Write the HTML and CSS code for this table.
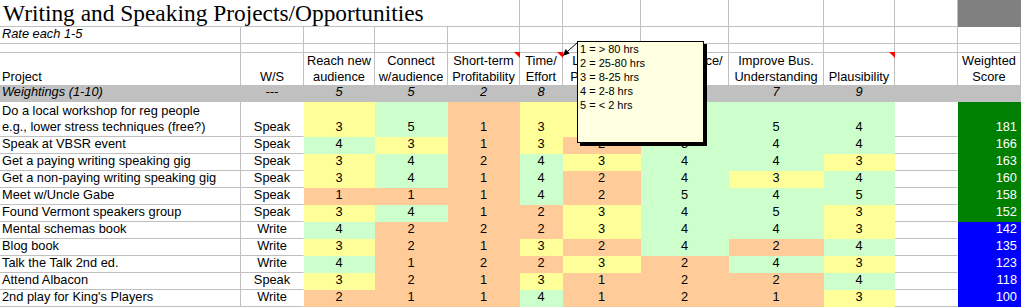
FILE: index.html
```html
<!DOCTYPE html>
<html>
<head>
<meta charset="utf-8">
<link rel="stylesheet" href="styles.css">
</head>
<body>
<div class="sheet">
  <!-- title row -->
  <div class="cell title"><span>Writing and Speaking Projects/Opportunities</span></div>
  <div class="cell"></div><div class="cell"></div><div class="cell"></div><div class="cell"></div><div class="cell"></div><div class="cell"></div>
  <div class="cell dk"></div>

  <!-- rate row -->
  <div class="cell l it"><span>Rate each 1-5</span></div>
  <div class="cell"></div><div class="cell"></div><div class="cell"></div><div class="cell"></div><div class="cell"></div><div class="cell"></div>
  <div class="cell"></div><div class="cell"></div><div class="cell"></div><div class="cell"></div><div class="cell"></div>

  <!-- spacer row -->
  <div class="cell"></div><div class="cell"></div><div class="cell"></div><div class="cell"></div><div class="cell"></div><div class="cell"></div>
  <div class="cell"></div><div class="cell"></div><div class="cell"></div><div class="cell"></div><div class="cell"></div><div class="cell"></div>

  <!-- header row -->
  <div class="cell h l"><span>Project</span></div>
  <div class="cell h"><span>W/S</span></div>
  <div class="cell h"><span>Reach new<br>audience</span></div>
  <div class="cell h"><span>Connect<br>w/audience</span></div>
  <div class="cell h tri"><span>Short-term<br>Profitability</span></div>
  <div class="cell h tri"><span>Time/<br>Effort</span></div>
  <div class="cell h"><span>Long-term<br>Profitability</span></div>
  <div class="cell h"><span>Competence/<br>Skill</span></div>
  <div class="cell h"><span>Improve Bus.<br>Understanding</span></div>
  <div class="cell h tri"><span>Plausibility</span></div>
  <div class="cell h"></div>
  <div class="cell h"><span>Weighted<br>Score</span></div>

  <!-- weightings row -->
  <div class="cell w l"><span>Weightings (1-10)</span></div>
  <div class="cell w"><span>---</span></div>
  <div class="cell w"><span>5</span></div>
  <div class="cell w"><span>5</span></div>
  <div class="cell w"><span>2</span></div>
  <div class="cell w"><span>8</span></div>
  <div class="cell w"><span>6</span></div>
  <div class="cell w"><span>6</span></div>
  <div class="cell w"><span>7</span></div>
  <div class="cell w"><span>9</span></div>
  <div class="cell w"></div>
  <div class="cell w"></div>

  <!-- data rows -->
  <div class="cell l"><span>Do a local workshop for reg people<br>e.g., lower stress techniques (free?)</span></div>
  <div class="cell ws"><span>Speak</span></div>
  <div class="cell y"><span>3</span></div><div class="cell g"><span>5</span></div><div class="cell p"><span>1</span></div><div class="cell y"><span>3</span></div>
  <div class="cell y"><span>3</span></div><div class="cell g"><span>4</span></div><div class="cell g"><span>5</span></div><div class="cell g"><span>4</span></div>
  <div class="cell k"></div><div class="cell r sg"><span>181</span></div>

  <div class="cell l"><span>Speak at VBSR event</span></div>
  <div class="cell ws"><span>Speak</span></div>
  <div class="cell g"><span>4</span></div><div class="cell y"><span>3</span></div><div class="cell p"><span>1</span></div><div class="cell y"><span>3</span></div>
  <div class="cell p"><span>2</span></div><div class="cell g"><span>3</span></div><div class="cell g"><span>4</span></div><div class="cell g"><span>4</span></div>
  <div class="cell k"></div><div class="cell r sg"><span>166</span></div>

  <div class="cell l"><span>Get a paying writing speaking gig</span></div>
  <div class="cell ws"><span>Speak</span></div>
  <div class="cell y"><span>3</span></div><div class="cell g"><span>4</span></div><div class="cell p"><span>2</span></div><div class="cell g"><span>4</span></div>
  <div class="cell y"><span>3</span></div><div class="cell g"><span>4</span></div><div class="cell g"><span>4</span></div><div class="cell y"><span>3</span></div>
  <div class="cell k"></div><div class="cell r sg"><span>163</span></div>

  <div class="cell l"><span>Get a non-paying writing speaking gig</span></div>
  <div class="cell ws"><span>Speak</span></div>
  <div class="cell y"><span>3</span></div><div class="cell g"><span>4</span></div><div class="cell p"><span>1</span></div><div class="cell g"><span>4</span></div>
  <div class="cell p"><span>2</span></div><div class="cell g"><span>4</span></div><div class="cell y"><span>3</span></div><div class="cell g"><span>4</span></div>
  <div class="cell k"></div><div class="cell r sg"><span>160</span></div>

  <div class="cell l"><span>Meet w/Uncle Gabe</span></div>
  <div class="cell ws"><span>Speak</span></div>
  <div class="cell p"><span>1</span></div><div class="cell p"><span>1</span></div><div class="cell p"><span>1</span></div><div class="cell g"><span>4</span></div>
  <div class="cell p"><span>2</span></div><div class="cell g"><span>5</span></div><div class="cell g"><span>4</span></div><div class="cell g"><span>5</span></div>
  <div class="cell k"></div><div class="cell r sg"><span>158</span></div>

  <div class="cell l"><span>Found Vermont speakers group</span></div>
  <div class="cell ws"><span>Speak</span></div>
  <div class="cell y"><span>3</span></div><div class="cell g"><span>4</span></div><div class="cell p"><span>1</span></div><div class="cell p"><span>2</span></div>
  <div class="cell y"><span>3</span></div><div class="cell g"><span>4</span></div><div class="cell g"><span>5</span></div><div class="cell y"><span>3</span></div>
  <div class="cell k"></div><div class="cell r sg"><span>152</span></div>

  <div class="cell l"><span>Mental schemas book</span></div>
  <div class="cell ws"><span>Write</span></div>
  <div class="cell g"><span>4</span></div><div class="cell p"><span>2</span></div><div class="cell p"><span>2</span></div><div class="cell p"><span>2</span></div>
  <div class="cell y"><span>3</span></div><div class="cell g"><span>4</span></div><div class="cell g"><span>4</span></div><div class="cell y"><span>3</span></div>
  <div class="cell k"></div><div class="cell r sb"><span>142</span></div>

  <div class="cell l"><span>Blog book</span></div>
  <div class="cell ws"><span>Write</span></div>
  <div class="cell y"><span>3</span></div><div class="cell p"><span>2</span></div><div class="cell p"><span>1</span></div><div class="cell y"><span>3</span></div>
  <div class="cell p"><span>2</span></div><div class="cell g"><span>4</span></div><div class="cell p"><span>2</span></div><div class="cell g"><span>4</span></div>
  <div class="cell k"></div><div class="cell r sb"><span>135</span></div>

  <div class="cell l"><span>Talk the Talk 2nd ed.</span></div>
  <div class="cell ws"><span>Write</span></div>
  <div class="cell g"><span>4</span></div><div class="cell p"><span>1</span></div><div class="cell p"><span>2</span></div><div class="cell p"><span>2</span></div>
  <div class="cell y"><span>3</span></div><div class="cell p"><span>2</span></div><div class="cell g"><span>4</span></div><div class="cell y"><span>3</span></div>
  <div class="cell k"></div><div class="cell r sb"><span>123</span></div>

  <div class="cell l"><span>Attend Albacon</span></div>
  <div class="cell ws"><span>Speak</span></div>
  <div class="cell y"><span>3</span></div><div class="cell p"><span>2</span></div><div class="cell p"><span>1</span></div><div class="cell y"><span>3</span></div>
  <div class="cell p"><span>1</span></div><div class="cell p"><span>2</span></div><div class="cell p"><span>2</span></div><div class="cell g"><span>4</span></div>
  <div class="cell k"></div><div class="cell r sb"><span>118</span></div>

  <div class="cell l"><span>2nd play for King's Players</span></div>
  <div class="cell ws"><span>Write</span></div>
  <div class="cell p"><span>2</span></div><div class="cell p"><span>1</span></div><div class="cell p"><span>1</span></div><div class="cell g"><span>4</span></div>
  <div class="cell p"><span>1</span></div><div class="cell p"><span>2</span></div><div class="cell p"><span>1</span></div><div class="cell y"><span>3</span></div>
  <div class="cell k"></div><div class="cell r sb"><span>100</span></div>

  <!-- comment arrow + tooltip -->
  <svg class="arrow" width="22" height="22" viewBox="0 0 22 22">
    <line x1="18" y1="4" x2="7.7" y2="13.3" stroke="#000" stroke-width="1"/>
    <polygon points="2.5,18 9.7,15.5 5.7,11.1" fill="#000"/>
  </svg>
  <div class="tip">
    <div>1 = &gt; 80 hrs</div>
    <div>2 = 25-80 hrs</div>
    <div>3 = 8-25 hrs</div>
    <div>4 = 2-8 hrs</div>
    <div>5 = &lt; 2 hrs</div>
  </div>
</div>
</body>
</html>
```
FILE: styles.css
```css
* { box-sizing: border-box; }
html, body { margin: 0; padding: 0; background: #fff; }
body { overflow: hidden; }

.sheet {
  position: relative;
  display: grid;
  grid-template-columns: 241px 63px 71px 73px 72px 43px 78px 88px 95px 71px 63px 63px;
  grid-template-rows: 27px 17px 9px 32px 17px 35px repeat(10, 17px);
  width: 1021px;
  font-family: "Liberation Sans", Arial, sans-serif;
  font-size: 12.8px;
  color: #000;
}

.cell {
  position: relative;
  display: flex;
  flex-direction: column;
  justify-content: flex-end;
  min-width: 0;
  border-right: 1px solid #c0c0c0;
  border-bottom: 1px solid #c0c0c0;
  padding: 0 0 1px 0;
  line-height: 16px;
  white-space: nowrap;
  text-align: center;
}

.title {
  grid-column: span 5;
  justify-content: flex-start;
  padding: 0 0 0 3px;
  font-family: "Liberation Serif", "Times New Roman", serif;
  font-size: 23.4px;
  line-height: 26px;
  text-align: left;
}

.dk { background: #808080; border-color: transparent; }

.l { text-align: left; padding-left: 2px; }
.r { text-align: right; padding-right: 3px; }
.it { font-style: italic; }

.h { border-bottom: 0; padding-bottom: 0; }

.w { background: #c0c0c0; border-color: transparent; font-style: italic; }

.ws { border-right-color: transparent; }
.k { border-right-color: transparent; }

.y { background: #ffff99; border-color: transparent; }
.g { background: #ccffcc; border-color: transparent; }
.p { background: #ffcc99; border-color: transparent; }

.sg { background: #008000; border-color: transparent; color: #fff; }
.sb { background: #0000ff; border-color: transparent; color: #fff; }

.tri::after {
  content: "";
  position: absolute;
  top: -1px;
  right: -1px;
  width: 0;
  height: 0;
  border-top: 6px solid #ff0000;
  border-left: 6px solid transparent;
}

.arrow {
  position: absolute;
  left: 560px;
  top: 38px;
}

.tip {
  position: absolute;
  left: 577px;
  top: 41px;
  width: 127px;
  height: 102px;
  background: #ffffe1;
  border: 1px solid #000;
  box-shadow: 3px 3px 0 #000;
  padding: 0 0 0 2px;
  font-family: "Liberation Sans", Arial, sans-serif;
  font-size: 11px;
  line-height: 14px;
  white-space: nowrap;
}
```
